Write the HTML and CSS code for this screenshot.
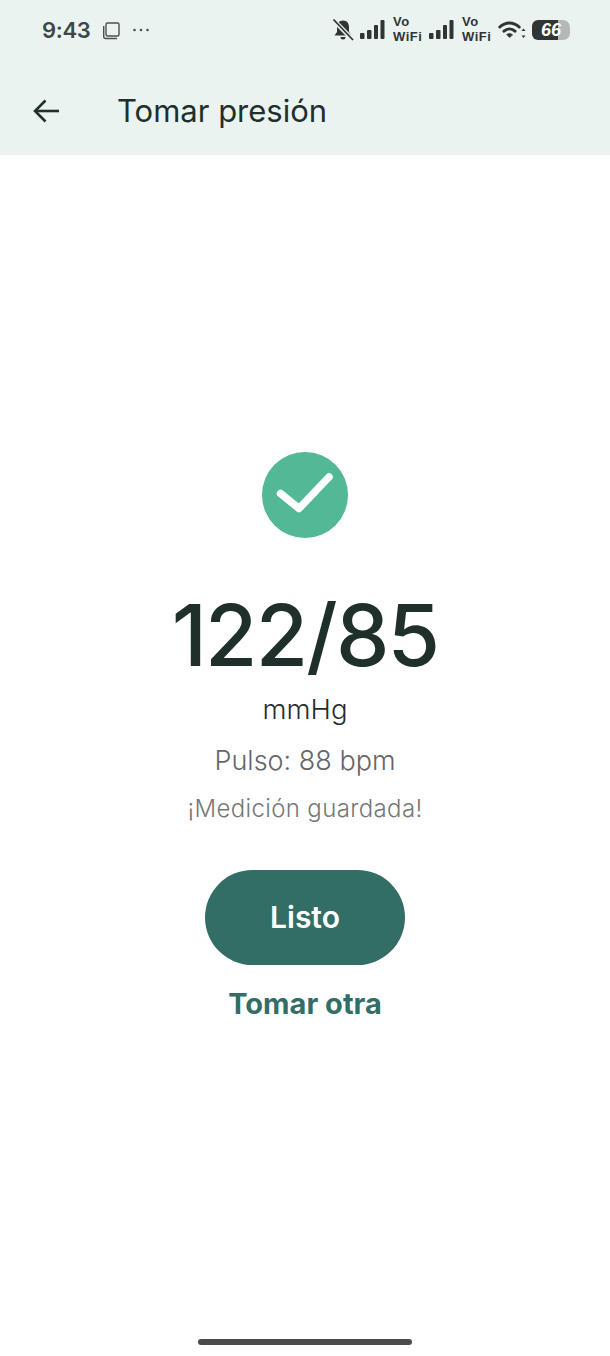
FILE: index.html
```html
<!DOCTYPE html>
<html lang="es">
<head>
<meta charset="utf-8">
<title>Tomar presión</title>
<link rel="stylesheet" href="styles.css">
</head>
<body>
<div class="screen">
  <header class="appbar">
    <div class="status">
      <div class="status-left">
        <span class="time">9:43</span>
        <svg class="ic-copy" width="19" height="19" viewBox="0 0 19 19" fill="none" stroke="#4a5150" stroke-width="1.4"><rect x="4" y="2" width="13" height="13" rx="1.5"/><path d="M1.7 5v10.5a2 2 0 0 0 2 2H15"/></svg>
        <svg class="ic-dots" width="18" height="4" viewBox="0 0 18 4" fill="#4a5150"><circle cx="2.500" cy="2" r="1.300"/><circle cx="9" cy="2" r="1.300"/><circle cx="15.500" cy="2" r="1.300"/></svg>
      </div>
      <div class="status-right">
        <svg width="22" height="24" viewBox="0 0 22 24" fill="#2f3534"><path d="M11 2.500c-3.800 0-6 2.800-6 6.500v5l-2.500 3.500h17L17 14V9c0-3.700-2.200-6.500-6-6.500zM8.500 19h5a2.500 2.500 0 0 1-5 0z"/><path d="M1.500 2 20.500 21.500" stroke="#eaf3f0" stroke-width="4.500"/><path d="M1.500 1.500 21 22" stroke="#2f3534" stroke-width="1.800"/></svg>
        <svg class="signal" width="25" height="20" viewBox="0 0 25 20" fill="#2f3534"><rect x="0" y="13" width="4.500" height="6" rx="1"/><rect x="7" y="10" width="4.500" height="9" rx="1"/><rect x="14" y="5" width="4" height="14" rx="1"/><rect x="20.500" y="0" width="4" height="19" rx="1"/></svg>
        <span class="vowifi">Vo<br>WiFi</span>
        <svg class="signal" width="25" height="20" viewBox="0 0 25 20" fill="#2f3534"><rect x="0" y="13" width="4.500" height="6" rx="1"/><rect x="7" y="10" width="4.500" height="9" rx="1"/><rect x="14" y="5" width="4" height="14" rx="1"/><rect x="20.500" y="0" width="4" height="19" rx="1"/></svg>
        <span class="vowifi">Vo<br>WiFi</span>
        <svg width="28" height="20" viewBox="0 0 28 20" fill="none" stroke="#2f3534" stroke-width="3" stroke-linecap="round"><path d="M1.800 7C7.500 1.500 15.500 1.500 21.200 7"/><path d="M6 11.200c3.300-3 7.700-3 11 0"/><path d="M11.500 17.200 8.800 14.500c1.600-1.100 3.800-1.100 5.400 0z" fill="#2f3534" stroke-width="1"/><path d="M25.500 8.500l-2 2.500h4zM25.500 18l-2-2.500h4z" fill="#2f3534" stroke="none"/></svg>
        <span class="battery">66</span>
      </div>
    </div>
    <div class="toolbar">
      <svg class="back" width="30" height="30" viewBox="0 0 30 30" fill="none" stroke="#1f2f2c" stroke-width="2.600"><path d="M28 15H4"/><path d="M14.500 4.500 4 15l10.500 10.500"/></svg>
      <h1 class="title">Tomar presión</h1>
    </div>
  </header>
  <main class="result">
    <svg class="check" width="86" height="86" viewBox="0 0 86 86"><circle cx="43" cy="43" r="43" fill="#52b896"/><path d="M18.500 41.500 37 56.500 67 25" fill="none" stroke="#fff" stroke-width="7.500" stroke-linecap="round" stroke-linejoin="round"/></svg>
    <div class="reading">122/85</div>
    <div class="unit">mmHg</div>
    <div class="pulse">Pulso: 88 bpm</div>
    <div class="saved">¡Medición guardada!</div>
    <button class="primary">Listo</button>
    <button class="link">Tomar otra</button>
  </main>
  <footer class="home"><span class="home-bar"></span></footer>
</div>
</body>
</html>
```
FILE: styles.css
```css
* { box-sizing: border-box; }
html, body { margin: 0; padding: 0; background: #fff; }
body { font-family: Inter, "Liberation Sans", sans-serif; color: #1f2f2c; }
.screen { width: 610px; height: 1356px; display: flex; flex-direction: column; overflow: hidden; }
.appbar { height: 155px; background: #eaf3f0; display: flex; flex-direction: column; flex: none; }
.status { height: 60px; padding: 0 40px 0 42px; display: flex; justify-content: space-between; align-items: center; }
.status-left { display: flex; align-items: center; gap: 11px; }
.time { font-size: 22px; font-weight: 600; color: #3f4645; line-height: 1; letter-spacing: -0.3px; }
.status-right { display: flex; align-items: center; gap: 6px; }
.signal { margin-right: 2px; }
.vowifi { display: block; font: 700 13px/15px "Liberation Sans", sans-serif; letter-spacing: 0.5px; color: #2f3534; width: 30px; margin-bottom: 2px; }
.battery { width: 38px; height: 20px; border-radius: 6px 7px 7px 6px; background: linear-gradient(90deg, #2f3534 68%, #b4b9b7 68%); color: #fff; font: italic 700 18px/20px "Liberation Sans", sans-serif; text-align: center; }
.toolbar { flex: 1; display: flex; align-items: center; padding: 7px 0 0 31px; gap: 56px; }
.title { margin: 0; font-size: 31px; font-weight: 400; line-height: 1.2; color: #1f2f2c; }
.result { flex: 1; display: flex; flex-direction: column; align-items: center; justify-content: center; padding-bottom: 2px; }
.reading { margin-top: 43px; font-size: 85px; font-weight: 500; line-height: 110px; letter-spacing: -1.8px; color: #1f2f2c; }
.unit { margin-top: 0; font-size: 27.500px; font-weight: 300; line-height: 36px; color: #1f2f2c; }
.pulse { margin-top: 16px; font-size: 27px; font-weight: 300; line-height: 36px; color: #666; }
.saved { margin-top: 15px; font-size: 24px; font-weight: 300; line-height: 30px; letter-spacing: 0.35px; color: #777; }
.primary { margin-top: 46px; width: 200px; height: 95px; border: 0; border-radius: 48px; background: #336e66; color: #fff; font: 600 30px Inter, sans-serif; }
.link { margin-top: 20px; border: 0; background: none; padding: 0; color: #336e66; font: 700 29px/38px Inter, sans-serif; }
.home { height: 35px; flex: none; display: flex; justify-content: center; align-items: flex-end; padding-bottom: 11px; }
.home-bar { width: 214px; height: 6px; border-radius: 3px; background: #4a4a4a; }
```
